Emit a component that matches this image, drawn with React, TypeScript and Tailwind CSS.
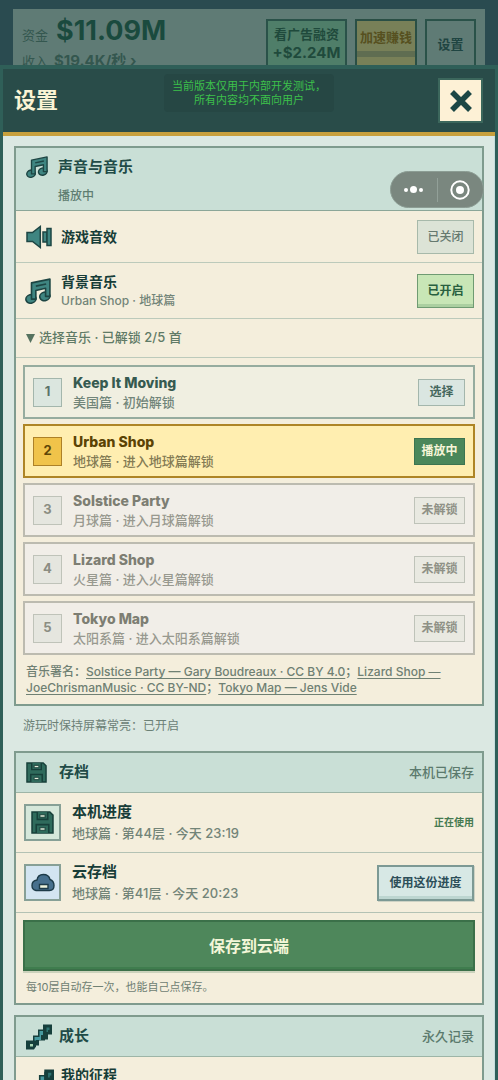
import { useState } from 'react'
import type { ReactNode } from 'react'
import clsx from 'clsx'

const tracks = [
  { id: 1, name: 'Keep It Moving', desc: '美国篇 · 初始解锁', unlocked: true },
  { id: 2, name: 'Urban Shop', desc: '地球篇 · 进入地球篇解锁', unlocked: true },
  { id: 3, name: 'Solstice Party', desc: '月球篇 · 进入月球篇解锁', unlocked: false },
  { id: 4, name: 'Lizard Shop', desc: '火星篇 · 进入火星篇解锁', unlocked: false },
  { id: 5, name: 'Tokyo Map', desc: '太阳系篇 · 进入太阳系篇解锁', unlocked: false },
]

function MusicIcon({ size }: { size: number }) {
  return (
    <svg width={size} height={size} viewBox="0 0 24 24" fill="#3f8581" stroke="#1d4543" strokeWidth="1.5" strokeLinejoin="round" className="shrink-0">
      <ellipse cx="5.500" cy="19.300" rx="4.700" ry="3.900" transform="rotate(-15 5.500 19.300)" />
      <ellipse cx="18.300" cy="17" rx="4.700" ry="3.900" transform="rotate(-15 18.300 17)" />
      <path d="M6 4.500 23 1v16h-4V9.500L10 11.500v8H6z" />
      <path d="M10 7.500 19.500 5.500" />
    </svg>
  )
}

function SpeakerIcon() {
  return (
    <svg width="26" height="24" viewBox="0 0 26 24" fill="#3f8581" stroke="#1d4543" strokeWidth="1.500" className="shrink-0">
      <path d="M1 7.500h5.500L14.300 1.500v21L6.500 16.500H1z" />
      <path d="M17 7h4v10h-4z" />
      <path d="M21 3.500h4v17h-4z" />
    </svg>
  )
}

function DiskIcon({ size }: { size: number }) {
  return (
    <svg width={size} height={size} viewBox="0 0 22 22" fill="#2f6b5c" stroke="#17403a" strokeWidth="1.500" className="shrink-0">
      <path d="M1 1h17l3 3v17H1z" />
      <path d="M6 1v7h10V1" />
      <path d="M5 21v-8h12v8" />
      <path d="M8.500 3.500h5v2.500h-5z" fill="#e4eedb" strokeWidth="1" />
      <path d="M8.500 16h5v2.500h-5z" fill="#e4eedb" strokeWidth="1" />
    </svg>
  )
}

function CloudIcon() {
  return (
    <svg width="24" height="20" viewBox="0 0 24 20" fill="#47708d" stroke="#1d3b48" strokeWidth="1.400" className="shrink-0">
      <path d="M5 17.500C2.500 17 1 15 1 12.500 1 9.500 3 7.500 6 7 6.500 3.500 9 1.500 12.300 1.500c3.700 0 6 2 6.700 5 2.500 1 4 3.200 4 6 0 2.800-1.700 5-4.500 5z" />
      <path d="M8.500 11.500h8.500v4H8.500z" fill="#eef4dd" />
    </svg>
  )
}

function StairsIcon({ size }: { size: number }) {
  return (
    <svg width={size} height={size} viewBox="0 0 26 25" className="shrink-0">
      <path d="M7 19v-8h5V5h5V2h5v8h-3v6h-6v5H7z" fill="#163f3c" />
      <path d="M8.500 18v-5.500h5v-6H17v4h-2v5h-5V18z" fill="#479aa0" />
      <path d="M0 16h10v6l-2 3H0z" fill="#163f3c" />
      <path d="M4 19.500h3v2.500H4z" fill="#a9d6b4" />
      <path d="M17 0h9v10h-4v5h-5z" fill="#163f3c" />
      <path d="M20.500 3h3v2.500h-1.500v2h-1.500z" fill="#2f7472" />
    </svg>
  )
}

function Card({ children }: { children: ReactNode }) {
  return <section className="border-2 border-[#7f9b8e] bg-[#f4eedc]">{children}</section>
}

function CardHeader({ icon, title, note }: { icon: ReactNode; title: string; note: string }) {
  return (
    <header className="flex h-10 items-center border-b border-[#9db5a7] bg-[#c9dfd6] pr-2 pl-[10px]">
      <span className="flex w-[33px] items-center">{icon}</span>
      <h2 className="flex-1 text-[15px] font-bold text-[#214b47]">{title}</h2>
      <span className="text-[13px] font-medium text-[#5b7a6d]">{note}</span>
    </header>
  )
}

function TopBar() {
  return (
    <div className="h-[65px] shrink-0 overflow-hidden bg-[#2a4b50] px-[13px] pt-[9px]">
      <div className="flex h-24 items-start bg-[#5f7b75] pt-[10px] pr-[9px] pl-[9px]">
        <div className="flex-1 text-[#34574f]">
          <div className="flex h-6 items-baseline gap-2">
            <span className="text-[13px] leading-6">资金</span>
            <strong className="text-[27px] leading-6 font-bold text-[#1a4a3e]">$11.09M</strong>
          </div>
          <div className="mt-2 flex items-baseline gap-[6px] text-[13px] leading-5">
            <span>收入</span>
            <strong className="text-[15px] font-bold">$19.4K/秒 ›</strong>
          </div>
        </div>
        <div className="flex h-14 gap-2 font-bold">
          <button className="flex w-[81px] flex-col items-center border-2 border-[#2a5249] bg-[#4f7e69] pt-1 text-[#1f4a3c]">
            <span className="text-[13px] leading-[18px]">看广告融资</span>
            <span className="text-[15px] leading-5">+$2.24M</span>
          </button>
          <button className="flex w-[62px] flex-col border-2 border-[#2a4f45] bg-[#788058] text-[13px] text-[#56501f]">
            <span className="w-full pt-[6px] leading-5">加速赚钱</span>
            <span className="mt-1 h-[6px] w-full bg-[#5f6d51]" />
          </button>
          <button className="w-[51px] border-2 border-[#2a5249] bg-[#5f7b75] pb-1 text-[13px] text-[#1f4542]">设置</button>
        </div>
      </div>
    </div>
  )
}

function TrackRow({ track, playing, onSelect }: { track: (typeof tracks)[number]; playing: boolean; onSelect: () => void }) {
  const locked = !track.unlocked
  return (
    <li
      className={clsx(
        'flex h-[54px] items-center border-2 px-2',
        playing && 'border-[#ae8526] bg-[#ffeeb0]',
        locked && 'border-[#bcbbb0] bg-[#f1eee8]',
        !playing && !locked && 'border-[#96ac9f] bg-[#f0efe1]'
      )}
    >
      <span
        className={clsx(
          'flex size-[29px] items-center justify-center border text-[13px] font-bold',
          playing && 'border-[#ad8127] bg-[#f0c34a] text-[#5f4608]',
          locked && 'border-[#bfc3b9] bg-[#e5e6df] text-[#8b8d82]',
          !playing && !locked && 'border-[#a3b6ac] bg-[#dbe6df] text-[#5c7369]'
        )}
      >
        {track.id}
      </span>
      <div className="ml-[11px] flex-1">
        <div className={clsx('text-[14px] leading-5 font-extrabold', playing ? 'text-[#5b4304]' : locked ? 'text-[#7d7e73]' : 'text-[#365a50]')}>
          {track.name}
        </div>
        <div className={clsx('text-[13px] leading-[18px] font-medium', playing ? 'text-[#847b54]' : locked ? 'text-[#98998f]' : 'text-[#71857a]')}>
          {track.desc}
        </div>
      </div>
      <button
        disabled={locked}
        onClick={onSelect}
        className={clsx(
          'h-[27px] border text-[12px] font-bold',
          playing && 'w-[51px] border-[#3c7450] bg-[#4b875a] text-[#f6f5d8]',
          locked && 'w-[51px] border-[#bfc3b9] bg-[#e9e9e1] text-[#8f9186]',
          !playing && !locked && 'w-[47px] border-[#a3b6ac] bg-[#dae6e1] text-[#45685d]'
        )}
      >
        {playing ? '播放中' : locked ? '未解锁' : '选择'}
      </button>
    </li>
  )
}

function SoundCard() {
  const [effects, setEffects] = useState(false)
  const [music, setMusic] = useState(true)
  const [open, setOpen] = useState(true)
  const [current, setCurrent] = useState(2)

  const toggleClass = (on: boolean) =>
    clsx(
      'h-[34px] w-[57px] border text-[12px]',
      on
        ? 'border-[#6f9b72] bg-[#c8e6b6] font-bold text-[#28603f] shadow-[inset_0_-3px_0_#abcfa0]'
        : 'border-[#a7b9aa] bg-[#dce3d6] font-medium text-[#65796f]'
    )

  return (
    <Card>
      <header className="flex h-[63px] border-b border-[#8ba698] bg-[#c9dfd6] pt-2 pl-[10px]">
        <MusicIcon size={22} />
        <div className="ml-[10px]">
          <h2 className="text-[15px] leading-[22px] font-bold text-[#214b47]">声音与音乐</h2>
          <p className="mt-[10px] text-[12px] leading-4 font-medium text-[#5f7d71]">播放中</p>
        </div>
      </header>
      <div className="flex h-[52px] items-center border-b border-[#bccabb] pr-2 pl-[10px]">
        <SpeakerIcon />
        <span className="ml-[9px] flex-1 text-[14px] font-bold text-[#173d38]">游戏音效</span>
        <button className={toggleClass(effects)} onClick={() => setEffects(!effects)}>
          {effects ? '已开启' : '已关闭'}
        </button>
      </div>
      <div className="flex h-14 items-center border-b border-[#bccabb] pr-2 pl-[9px]">
        <MusicIcon size={26} />
        <div className="ml-[10px] flex-1">
          <div className="text-[14px] leading-5 font-bold text-[#173d38]">背景音乐</div>
          <div className="text-[12px] leading-[18px] font-medium text-[#728478]">Urban Shop · 地球篇</div>
        </div>
        <button className={toggleClass(music)} onClick={() => setMusic(!music)}>
          {music ? '已开启' : '已关闭'}
        </button>
      </div>
      <button
        className="flex h-[39px] w-full items-center gap-1 border-b border-[#bccabb] pl-[10px] text-[13px] font-medium text-[#5f7a66]"
        aria-expanded={open}
        onClick={() => setOpen(!open)}
      >
        <svg width="9" height="9" viewBox="0 0 9 9" fill="#55725f">
          <path d="M0 0h9L4.500 9z" />
        </svg>
        选择音乐 · 已解锁 2/5 首
      </button>
      {open && (
        <ul className="flex flex-col gap-[5px] px-[7px] pt-[7px]">
          {tracks.map(track => (
            <TrackRow key={track.id} track={track} playing={track.id === current} onSelect={() => setCurrent(track.id)} />
          ))}
        </ul>
      )}
      <p className="px-[10px] pt-[9px] pb-2 text-[12px] leading-4 font-medium text-[#6f8073]">
        音乐署名：
        <a href="#solstice-party" className="underline underline-offset-2">Solstice Party — Gary Boudreaux · CC BY 4.0</a>；
        <a href="#lizard-shop" className="underline underline-offset-2">Lizard Shop — JoeChrismanMusic · CC BY-ND</a>；
        <a href="#tokyo-map" className="underline underline-offset-2">Tokyo Map — Jens Vide</a>
      </p>
    </Card>
  )
}

function SaveRow({ icon, tint, title, desc, children }: { icon: ReactNode; tint: string; title: string; desc: string; children: ReactNode }) {
  return (
    <div className="flex h-[60px] items-center border-b border-[#b3c2b4] pr-2 pl-2">
      <span className={clsx('flex size-[37px] items-center justify-center border-2 border-[#87a096]', tint)}>{icon}</span>
      <div className="ml-[11px] flex-1 pb-[2px]">
        <div className="text-[15px] leading-[22px] font-bold text-[#173d38]">{title}</div>
        <div className="text-[13px] leading-5 font-medium text-[#728478]">{desc}</div>
      </div>
      {children}
    </div>
  )
}

function SaveCard() {
  return (
    <Card>
      <CardHeader icon={<DiskIcon size={21} />} title="存档" note="本机已保存" />
      <SaveRow icon={<DiskIcon size={23} />} tint="bg-[#d5e7da]" title="本机进度" desc="地球篇 · 第44层 · 今天 23:19">
        <span className="text-[10px] font-bold text-[#457a51]">正在使用</span>
      </SaveRow>
      <SaveRow icon={<CloudIcon />} tint="bg-[#d3e5f1]" title="云存档" desc="地球篇 · 第41层 · 今天 20:23">
        <button className="h-9 w-[97px] border-2 border-[#7c9994] bg-[#d7e8e5] text-[12px] font-bold text-[#2d4f59] shadow-[inset_0_-3px_0_#bdd6d1,1px_1px_0_#cdd2c4]">
          使用这份进度
        </button>
      </SaveRow>
      <div className="px-[7px] pt-[7px] pb-2">
        <button className="h-[51px] w-full border-2 border-[#3b7049] bg-[#4e875b] text-[16px] font-bold text-[#f3f6d8] shadow-[inset_0_-2px_0_#3f7d4e,0_2px_0_#cbd2bc]">
          保存到云端
        </button>
        <p className="mt-2 px-[3px] text-[11px] leading-4 text-[#6f8073]">每10层自动存一次，也能自己点保存。</p>
      </div>
    </Card>
  )
}

function GrowthCard() {
  return (
    <Card>
      <CardHeader icon={<StairsIcon size={26} />} title="成长" note="永久记录" />
      <div className="flex h-14 items-start pt-2 pl-[10px]">
        <span className="pt-1"><StairsIcon size={28} /></span>
        <span className="ml-[7px] text-[14px] leading-5 font-bold text-[#173d38]">我的征程</span>
      </div>
    </Card>
  )
}

export default function App() {
  return (
    <div className="relative flex h-screen flex-col overflow-hidden bg-[#2a4b50] font-[Inter,'Noto_Sans_CJK_SC',sans-serif]">
      <TopBar />
      <main className="flex min-h-0 flex-1 flex-col border-x-[3px] border-t-4 border-[#2f5f58] bg-[#dbe8e2]">
        <header className="relative flex h-[67px] shrink-0 items-center justify-between border-b-4 border-[#c8a03c] bg-[#294c49] pr-3 pl-[11px]">
          <h1 className="text-[22px] font-bold text-[#fbf4d5]">设置</h1>
          <button aria-label="关闭" className="flex size-[45px] items-center justify-center border-2 border-[#3c675c] bg-[#fdf1d6]">
            <svg width="24" height="24" viewBox="0 0 24 24" stroke="#1c4745" strokeWidth="5.500">
              <path d="M3 3l18 18M21 3 3 21" />
            </svg>
          </button>
          <p className="absolute top-[5px] left-1/2 w-[170px] -translate-x-1/2 rounded bg-[#264744] py-[5px] text-center text-[11px] leading-[14px] whitespace-nowrap text-[#3dc04b]">
            当前版本仅用于内部开发测试，
            <br />
            所有内容均不面向用户
          </p>
        </header>
        <div className="flex min-h-0 flex-1 flex-col overflow-hidden border-r border-[#c6dedd] pt-[10px] pr-[10px] pl-[11px]">
          <SoundCard />
          <p className="mt-[11px] mb-4 px-[9px] text-[12px] leading-[18px] text-[#6b8076]">游玩时保持屏幕常亮：已开启</p>
          <SaveCard />
          <div className="mt-[10px]">
            <GrowthCard />
          </div>
        </div>
      </main>
      <div className="absolute top-[171px] right-[14px] flex h-[37px] w-[94px] items-center rounded-full border border-[#8c9d94] bg-[#7a877f]">
        <button aria-label="更多" className="flex flex-1 items-center justify-center gap-[2px]">
          <i className="size-1 rounded-full bg-white" />
          <i className="size-[7px] rounded-full bg-white" />
          <i className="size-1 rounded-full bg-white" />
        </button>
        <span className="h-6 w-px bg-[#92a098]" />
        <button aria-label="退出" className="flex flex-1 justify-center">
          <svg width="20" height="20" viewBox="0 0 20 20">
            <circle cx="10" cy="10" r="8.700" fill="none" stroke="#fff" strokeWidth="2" />
            <circle cx="10" cy="10" r="4" fill="#fff" />
          </svg>
        </button>
      </div>
    </div>
  )
}
